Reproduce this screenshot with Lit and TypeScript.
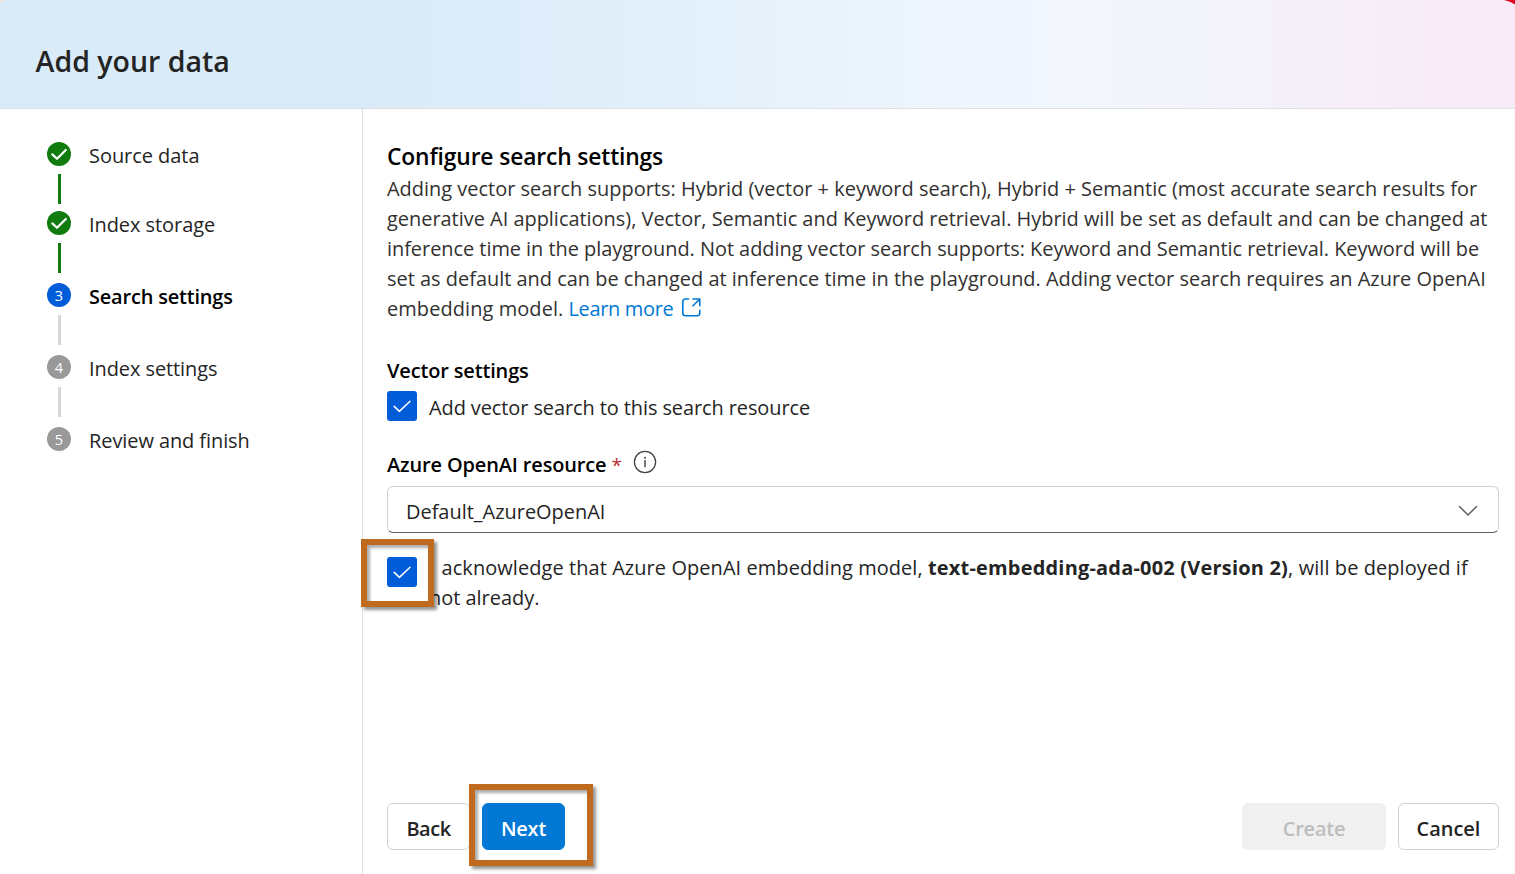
import { LitElement, html, css, nothing } from "lit";
import { customElement } from "lit/decorators.js";
import { classMap } from "lit/directives/class-map.js";

type StepState = "done" | "current" | "todo";
interface Step { label: string; state: StepState; track: string; }

const STEPS: Step[] = [
  { label: "Source data", state: "done", track: "t-source" },
  { label: "Index storage", state: "done", track: "t-storage" },
  { label: "Search settings", state: "current", track: "t-search" },
  { label: "Index settings", state: "todo", track: "t-index" },
  { label: "Review and finish", state: "todo", track: "t-review" },
];

@customElement("app-root")
export class AppRoot extends LitElement {
  static styles = css`
    :host {
      display: flex;
      flex-direction: column;
      position: relative;
      box-sizing: border-box;
      height: 874px;
      overflow: hidden;
      background: #fff;
      color: #242424;
      font-family: "Open Sans", "Noto Sans", sans-serif;
      font-size: 19.95px;
      line-height: 30px;
      white-space: nowrap;
    }
    * { box-sizing: border-box; }
    svg { display: block; flex: none; }

    header {
      flex: none;
      height: 109px;
      padding: 41px 35px 0 35.6px;
      border-bottom: 1px solid #e0e0e0;
      background: linear-gradient(90deg, #d9eaf8 0, #d9eaf8 370px, #deedfa 520px, #e5f1fa 740px, #edf5fd 920px, #f2f6fe 1050px, #f3f4fa 1210px, #f5f0fb 1300px, #f7ecf6 1420px, #f8eaf8 1515px);
    }
    h1 { margin: 0; font-size: 28.5px; line-height: 40px; font-weight: 600; color: #242424; }
    .corner { position: absolute; top: 0; }
    .left { left: 0; }
    .right { right: 0; }

    .body { flex: 1; display: flex; min-height: 0; }
    nav {
      width: 363px;
      flex: none;
      padding: 33px 0 0 47px;
      border-right: 1px solid #e0e0e0;
    }
    .step { display: grid; grid-template-columns: 24px auto; column-gap: 18px; height: 72px; align-content: start; justify-content: start; }
    .step.done.first { height: 69px; }
    .dot {
      width: 24px; height: 24px; border-radius: 50%;
      display: grid; place-items: center;
      color: #fff; font-size: 14.5px; line-height: 24px;
    }
    .num { height: 24px; line-height: 26px; }
    .done .dot { background: #107c10; }
    .current .dot { background: #015cda; }
    .todo .dot { background: #999; }
    .label { height: 24px; line-height: 28px; }
    .current .label { font-weight: 600; color: #000; }
    .rail { width: 3px; height: 30px; margin: 8px 0 0 11px; background: #d6d6d6; }
    .done .rail { background: #107c10; }

    main { flex: 1; min-width: 0; display: flex; flex-direction: column; padding: 32px 16px 24px 24px; }
    h2 { margin: 0 0 1px; font-size: 22.8px; line-height: 32px; font-weight: 600; color: #000; letter-spacing: -0.13px; }
    .desc { color: #323130; }
    .line { display: flex; height: 30px; }
    .link { display: flex; color: #0078d4; margin-left: 5px; }
    .link svg { margin: 3px 0 0 8px; }
    h3 { margin: 0; font-size: 19.95px; line-height: 30px; font-weight: 600; color: #000; }
    .vector { margin-top: 32px; }
    .check {
      width: 30px; height: 30px; flex: none; border-radius: 3px;
      background: #015cda; display: grid; place-items: center;
    }
    .row { display: flex; gap: 12px; }
    .first-row { margin-top: 5px; }
    .first-row .text { padding-top: 2px; }
    .resource { display: flex; margin-top: 27px; }
    .req { color: #bc2f32; font-weight: 400; margin-left: 5px; font-size: 19px; }
    .info { margin: 0 0 0 11px; }
    .select {
      display: flex; justify-content: space-between; align-items: flex-start;
      height: 47px; margin-top: 6px; padding: 10px 19px 0 18px;
      border: 1px solid #d1d1d1; border-bottom-color: #616161; border-radius: 6px;
      color: #242424;
    }
    .chev { margin: 8px 1px 0 0; }
    .ack { position: relative; margin-top: 20px; }
    .ack .check { margin-top: 4px; }
    .ack b { font-weight: 700; }
    .pronoun { margin-right: 1.6px; }
    .mark {
      position: absolute; border: 6px solid #bf6a1f;
      box-shadow: 3px 3px 3px rgba(0,0,0,.42), inset 3px 3px 3px rgba(0,0,0,.32);
    }
    .mark-ack { left: -26px; top: -14px; width: 73px; height: 68px; }
    .mark-next { left: -13px; top: -19px; width: 124px; height: 82px; }

    footer { display: flex; gap: 12px; margin-top: auto; }
    .btn {
      height: 47px; border: 1px solid #d1d1d1; border-radius: 6px; background: #fff;
      font: inherit; font-weight: 600; line-height: 30px; color: #242424; padding: 5px 0 0; text-align: center;
    }
    .back { width: 83px; }
    .next { width: 83px; background: #0078d4; border-color: #0078d4; color: #fff; }
    .create { width: 144px; background: #f0f0f0; border-color: #f0f0f0; color: #bdbdbd; }
    .cancel { width: 101px; }
    .hold { position: relative; display: flex; }
    .push { margin-left: auto; }

    .t-source { letter-spacing: -0.02px; }
    .t-storage { letter-spacing: -0.04px; }
    .t-search { letter-spacing: -0.17px; }
    .t-index { letter-spacing: -0.06px; }
    .t-review { letter-spacing: -0.06px; }
    .t-l1 { letter-spacing: 0.012px; }
    .t-l2 { letter-spacing: -0.008px; }
    .t-l3 { letter-spacing: -0.034px; }
    .t-l4 { letter-spacing: 0.004px; }
    .t-l5 { letter-spacing: 0.1px; }
    .t-learn { letter-spacing: -0.3px; }
    .t-vec { letter-spacing: -0.13px; }
    .t-add { letter-spacing: -0.08px; }
    .t-res { letter-spacing: -0.12px; }
    .t-ack { letter-spacing: 0.09px; }
    .t-model { letter-spacing: 0.22px; }
    .t-will { letter-spacing: 0.1px; }
    .t-back { letter-spacing: -0.45px; }
    .t-next { letter-spacing: -0.2px; }
    .t-create { letter-spacing: -0.2px; }
  `;

  private tick() {
    return html`<svg width="20" height="20" viewBox="0 0 20 20" fill="none" stroke="#fff"
      stroke-width="1.5" stroke-linecap="round" stroke-linejoin="round">
      <path d="M2.200 10.400 7.400 15.400 18 5.200" /></svg>`;
  }

  private step(s: Step, i: number) {
    return html`<div class=${classMap({ step: true, [s.state]: true, first: i === 0 })}>
      <div class="dot">${s.state === "done"
        ? html`<svg width="24" height="24" viewBox="0 0 24 24" fill="none" stroke="#fff" stroke-width="2.2"
            stroke-linecap="round" stroke-linejoin="round"><path d="M5.300 12.400 10 16.800 18.800 8" /></svg>`
        : html`<span class="num">${i + 1}</span>`}</div>
      <div class="label"><span class=${s.track}>${s.label}</span></div>
      ${i < STEPS.length - 1 ? html`<div class="rail"></div>` : nothing}
    </div>`;
  }

  render() {
    return html`
      <header><h1>Add your data</h1></header>
      <svg class="corner left" width="10" height="4" viewBox="0 0 10 4"><path d="M0 0H9Q3 .4 0 3Z" fill="#e6e3e1" /></svg>
      <svg class="corner right" width="12" height="5" viewBox="0 0 12 5"><path d="M1 0H12V4.600Q7 1.200 1 0Z" fill="#e00b1c" /></svg>
      <div class="body">
        <nav>${STEPS.map((s, i) => this.step(s, i))}</nav>
        <main>
          <h2>Configure search settings</h2>
          <div class="desc">
            <div class="line t-l1">Adding vector search supports: Hybrid (vector + keyword search), Hybrid + Semantic (most accurate search results for</div>
            <div class="line t-l2">generative AI applications), Vector, Semantic and Keyword retrieval. Hybrid will be set as default and can be changed at</div>
            <div class="line t-l3">inference time in the playground. Not adding vector search supports: Keyword and Semantic retrieval. Keyword will be</div>
            <div class="line t-l4">set as default and can be changed at inference time in the playground. Adding vector search requires an Azure OpenAI</div>
            <div class="line"><span class="t-l5">embedding model.</span><span class="link"><span class="t-learn">Learn more</span>
              <svg width="21" height="21" viewBox="0 0 21 21" fill="none" stroke="#0078d4" stroke-width="1.6" stroke-linecap="round" stroke-linejoin="round">
                <path d="M7.500 2H4.600A2.800 2.800 0 0 0 1.800 4.800V16A2.800 2.800 0 0 0 4.600 18.800H16A2.800 2.800 0 0 0 18.800 16V13.200M12 2H18.800V8.800M18.600 2.200 12 8.800" />
              </svg></span></div>
          </div>
          <h3 class="vector t-vec">Vector settings</h3>
          <div class="row first-row"><div class="check">${this.tick()}</div><div class="text t-add">Add vector search to this search resource</div></div>
          <h3 class="resource"><span class="t-res">Azure OpenAI resource</span><span class="req">*</span>
            <svg class="info" width="24" height="24" viewBox="0 0 24 24" fill="none">
              <circle cx="12" cy="12" r="10.600" stroke="#424242" stroke-width="1.300" />
              <path d="M12 10.600V16.800" stroke="#424242" stroke-width="1.400" stroke-linecap="round" />
              <circle cx="12" cy="7.700" r="1" fill="#424242" />
            </svg></h3>
          <div class="select"><span>Default_AzureOpenAI</span>
            <svg class="chev" width="20" height="12" viewBox="0 0 20 12" fill="none" stroke="#616161" stroke-width="1.500" stroke-linecap="round" stroke-linejoin="round"><path d="M1.500 1.500 10 10 18.500 1.500" /></svg></div>
          <div class="row ack">
            <div class="check">${this.tick()}</div>
            <div><div><span class="t-ack"><span class="pronoun">I</span> acknowledge that Azure OpenAI embedding model,</span> <b class="t-model">text-embedding-ada-002 (Version 2)</b><span class="t-will">, will be deployed if</span></div><div>not already.</div></div>
            <div class="mark mark-ack"></div>
          </div>
          <footer>
            <button class="btn back t-back">Back</button>
            <div class="hold"><button class="btn next t-next">Next</button><div class="mark mark-next"></div></div>
            <button class="btn create push t-create">Create</button>
            <button class="btn cancel">Cancel</button>
          </footer>
        </main>
      </div>`;
  }
}
